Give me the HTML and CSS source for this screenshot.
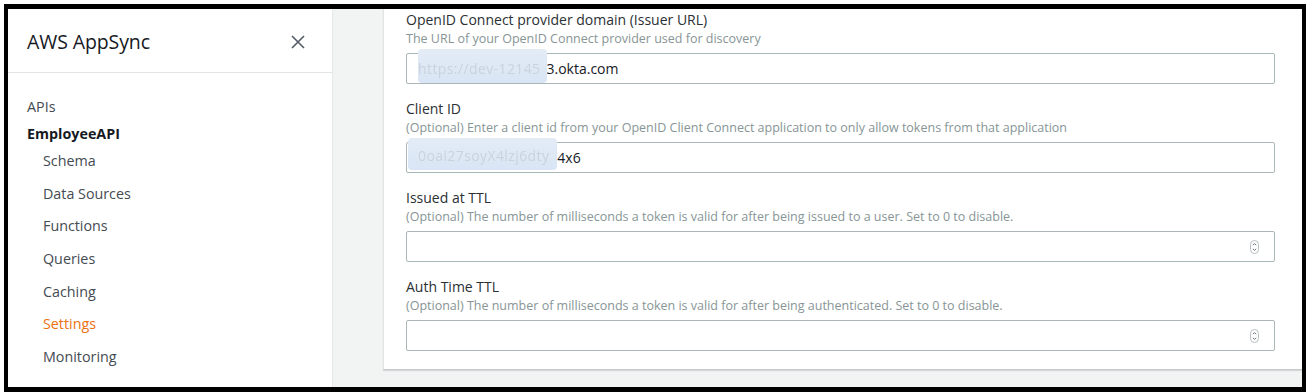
FILE: index.html
```html
<!DOCTYPE html>
<html lang="en">
<head>
<meta charset="utf-8">
<title>AWS AppSync - Settings</title>
<link rel="stylesheet" href="styles.css">
</head>
<body>
<div class="frame">
  <aside class="sidebar">
    <div class="side-header">
      <span class="side-title">AWS AppSync</span>
      <svg class="close" width="14" height="14" viewBox="0 0 14 14" aria-hidden="true">
        <path d="M1 1 L13 13 M13 1 L1 13" stroke="#545b64" stroke-width="1.6" fill="none"/>
      </svg>
    </div>
    <nav class="nav">
      <div class="nav-top">APIs</div>
      <div class="nav-api">EmployeeAPI</div>
      <ul class="nav-list">
        <li>Schema</li>
        <li>Data Sources</li>
        <li>Functions</li>
        <li>Queries</li>
        <li>Caching</li>
        <li class="active">Settings</li>
        <li>Monitoring</li>
      </ul>
    </nav>
  </aside>
  <main class="main">
    <section class="card">
      <div class="field">
        <div class="label">OpenID Connect provider domain (Issuer URL)</div>
        <div class="desc">The URL of your OpenID Connect provider used for discovery</div>
        <div class="input"><span class="redact">https://dev-12145</span><span class="val">3.okta.com</span></div>
      </div>
      <div class="field">
        <div class="label">Client ID</div>
        <div class="desc">(Optional) Enter a client id from your OpenID Client Connect application to only allow tokens from that application</div>
        <div class="input"><span class="redact redact2">0oai27soyX4lzj6dty</span><span class="val">4x6</span></div>
      </div>
      <div class="field">
        <div class="label">Issued at TTL</div>
        <div class="desc">(Optional) The number of milliseconds a token is valid for after being issued to a user. Set to 0 to disable.</div>
        <div class="input number">
          <svg class="spin" width="9" height="14" viewBox="0 0 9 14" aria-hidden="true">
            <rect x="0.5" y="0.5" width="8" height="13" rx="4" fill="#fff" stroke="#b8c0c2"/>
            <path d="M2.8 5.2 L4.5 3.6 L6.2 5.2 M2.8 8.8 L4.5 10.4 L6.2 8.8" stroke="#6b7375" stroke-width="1" fill="none"/>
          </svg>
        </div>
      </div>
      <div class="field">
        <div class="label">Auth Time TTL</div>
        <div class="desc">(Optional) The number of milliseconds a token is valid for after being authenticated. Set to 0 to disable.</div>
        <div class="input number">
          <svg class="spin" width="9" height="14" viewBox="0 0 9 14" aria-hidden="true">
            <rect x="0.5" y="0.5" width="8" height="13" rx="4" fill="#fff" stroke="#b8c0c2"/>
            <path d="M2.8 5.2 L4.5 3.6 L6.2 5.2 M2.8 8.8 L4.5 10.4 L6.2 8.8" stroke="#6b7375" stroke-width="1" fill="none"/>
          </svg>
        </div>
      </div>
    </section>
  </main>
</div>
</body>
</html>
```
FILE: styles.css
```css
* { box-sizing: border-box; }
html, body {
  margin: 0;
  padding: 0;
  background: #ffffff;
}
body {
  font-family: "Open Sans", "Liberation Sans", sans-serif;
  color: #16191f;
}
.frame {
  margin: 4px 0 0 4px;
  width: 1302px;
  height: 388px;
  border-style: solid;
  border-color: #000;
  border-width: 5px 4px 5px 4px;
  display: flex;
  overflow: hidden;
  background: #fff;
}
.sidebar {
  width: 325px;
  flex-shrink: 0;
  border-right: 1px solid #e4e8e8;
  background: #fff;
}
.side-header {
  height: 64px;
  border-bottom: 1px solid #e1e5e5;
  display: flex;
  align-items: center;
  justify-content: space-between;
  padding: 2px 27px 0 19px;
}
.side-title {
  font-size: 19.5px;
  color: #16191f;
  letter-spacing: -0.1px;
}
.close { display: block; }
.nav {
  padding-top: 24px;
  font-size: 14.3px;
  color: #444b52;
}
.nav-top {
  padding-left: 19px;
  line-height: 20px;
}
.nav-api {
  padding-left: 19px;
  line-height: 20px;
  margin-top: 7px;
  font-weight: 700;
  color: #16191f;
}
.nav-list {
  list-style: none;
  margin: 7px 0 0 0;
  padding: 0 0 0 35px;
  display: flex;
  flex-direction: column;
  gap: 12.67px;
}
.nav-list li {
  line-height: 20px;
  color: #444b52;
}
.nav-list li.active {
  color: #ec7211;
}
.main {
  flex: 1;
  background: #f2f3f3;
  padding-left: 50px;
  overflow: hidden;
  min-width: 0;
}
.card {
  width: 930px;
  flex-shrink: 0;
  margin-top: -10px;
  background: #fff;
  border: 1px solid #dfe3e3;
  border-bottom-color: #c4cacb;
  box-shadow: 0 1px 1px rgba(0, 28, 36, 0.12);
  padding: 10px 37px 18px 22px;
}
.field + .field { margin-top: 15px; }
.label {
  font-size: 14px;
  line-height: 20px;
  color: #2b3034;
}
.desc {
  font-size: 12.5px;
  line-height: 18px;
  color: #879596;
}
.input {
  margin-top: 5px;
  height: 31px;
  border: 1px solid #aab7b8;
  border-radius: 2px;
  background: #fff;
  display: flex;
  align-items: center;
  padding-left: 11px;
  font-size: 14px;
  color: #16191f;
}
.input.number {
  justify-content: flex-end;
  padding-right: 15px;
}
.redact {
  display: inline-block;
  line-height: 28px;
  margin-top: -6px;
  padding-top: 6px;
  padding-right: 6px;
  color: #c9d3dd;
  letter-spacing: 0.4px;
  background: linear-gradient(180deg, #e3ebf6 0%, #d9e5f5 100%);
  border-radius: 4px;
  filter: blur(0.6px);
}
.redact2 {
  margin-left: -10px;
  padding-left: 10px;
  margin-top: -8px;
  padding-top: 4px;
  padding-right: 8px;
}
.val { color: #16191f; }
.spin { display: block; }
```
